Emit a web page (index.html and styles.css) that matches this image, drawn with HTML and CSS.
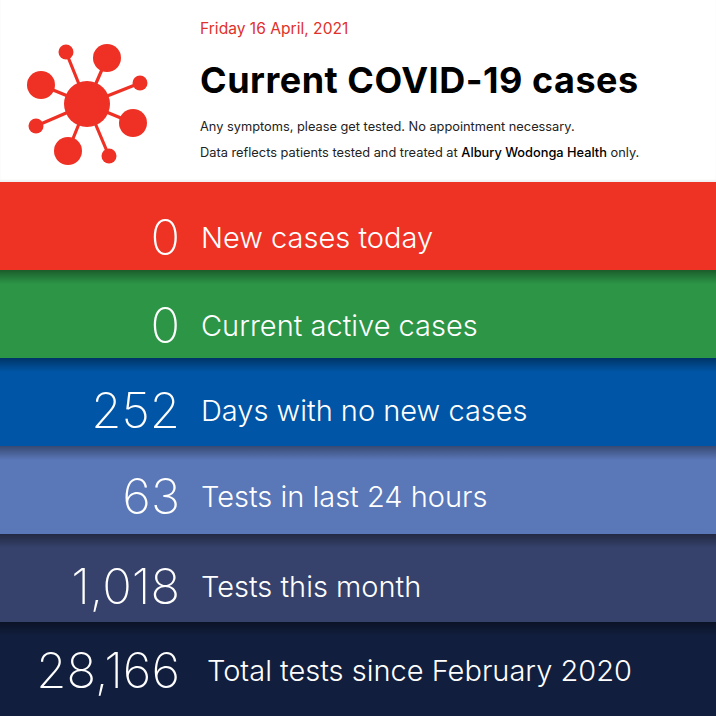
FILE: index.html
```html
<!DOCTYPE html>
<html>
<head>
<meta charset="utf-8">
<link rel="stylesheet" href="styles.css">
</head>
<body>
<div class="page">
  <header class="header">
    <div class="logo">
      <svg width="150" height="182" viewBox="0 0 150 182">
        <g stroke="#ee3124" stroke-width="3.2" stroke-linecap="round">
          <line x1="87" y1="104" x2="66" y2="52"/>
          <line x1="87" y1="104" x2="107" y2="58"/>
          <line x1="87" y1="104" x2="140" y2="83"/>
          <line x1="87" y1="104" x2="41" y2="85"/>
          <line x1="87" y1="104" x2="36" y2="126"/>
          <line x1="87" y1="104" x2="133" y2="123"/>
          <line x1="87" y1="104" x2="68" y2="151"/>
          <line x1="87" y1="104" x2="109" y2="156"/>
        </g>
        <g fill="#ee3124">
          <circle cx="87" cy="104" r="23"/>
          <circle cx="66" cy="52" r="7.5"/>
          <circle cx="107" cy="58" r="14"/>
          <circle cx="140" cy="83" r="7.5"/>
          <circle cx="41" cy="85" r="14"/>
          <circle cx="36" cy="126" r="7.5"/>
          <circle cx="133" cy="123" r="14"/>
          <circle cx="68" cy="151" r="14"/>
          <circle cx="109" cy="156" r="7.5"/>
        </g>
      </svg>
    </div>
    <div class="intro">
      <div class="date">Friday 16 April, 2021</div>
      <h1 class="title">Current COVID-19 cases</h1>
      <p class="note">Any symptoms, please get tested. No appointment necessary.</p>
      <p class="note">Data reflects patients tested and treated at <span class="strong">Albury Wodonga Health</span> only.</p>
    </div>
  </header>
  <section class="band band-red first">
    <span class="num">0</span><span class="label">New cases today</span>
  </section>
  <section class="band band-green second">
    <span class="num">0</span><span class="label">Current active cases</span>
  </section>
  <section class="band band-blue">
    <span class="num">252</span><span class="label">Days with no new cases</span>
  </section>
  <section class="band band-light">
    <span class="num">63</span><span class="label">Tests in last 24 hours</span>
  </section>
  <section class="band band-navy">
    <span class="num">1,018</span><span class="label">Tests this month</span>
  </section>
  <section class="band band-dark last">
    <span class="num">28,166</span><span class="label">Total tests since February 2020</span>
  </section>
</div>
</body>
</html>
```

FILE: styles.css
```css
* { box-sizing: border-box; }
html, body { margin: 0; padding: 0; }
body {
  width: 716px;
  height: 716px;
  overflow: hidden;
  font-family: Inter, "Open Sans", sans-serif;
  background: #fff;
}
.page { display: flex; flex-direction: column; }
.header {
  height: 182px;
  display: flex;
  background: #fff;
  box-shadow: inset 0 -2px 2px rgba(0,0,0,0.06);
}
.logo { width: 200px; flex: none; }
.logo svg { display: block; }
.intro { padding-top: 19px; }
.date {
  color: #e0312a;
  font-size: 15.6px;
  line-height: 20px;
  font-weight: 400;
}
.title {
  margin: 20px 0 0;
  font-size: 36px;
  line-height: 42px;
  font-weight: 700;
  color: #000;
  letter-spacing: 0.5px;
}
.note {
  margin: 0;
  font-size: 12.8px;
  line-height: 26px;
  color: #222;
  font-weight: 400;
}
.note:first-of-type { margin-top: 13px; }
.strong { color: #000; font-weight: 500; }

.band {
  height: 88px;
  display: flex;
  align-items: center;
  padding-top: 16px;
  color: #fff;
  background-image: linear-gradient(to bottom, rgba(0,0,0,0.38), rgba(0,0,0,0) 14px);
}
.band.first { background-image: none; padding-top: 22px; }
.band.second { padding-top: 22px; }
.band-light { padding-top: 12px; }
.band.last { height: 96px; padding-top: 0; }
.band-red { background-color: #ee3224; }
.band-green { background-color: #2c9546; }
.band-blue { background-color: #0055a6; }
.band-light { background-color: #5a77b8; }
.band-navy { background-color: #36426c; }
.band-dark { background-color: #111e3d; }
.num {
  width: 180px;
  flex: none;
  text-align: right;
  font-size: 49px;
  font-weight: 200;
  letter-spacing: 0;
}
.label {
  margin-left: 21px;
  font-size: 29px;
  font-weight: 300;
}
.last .label { margin-left: 27px; }
```
